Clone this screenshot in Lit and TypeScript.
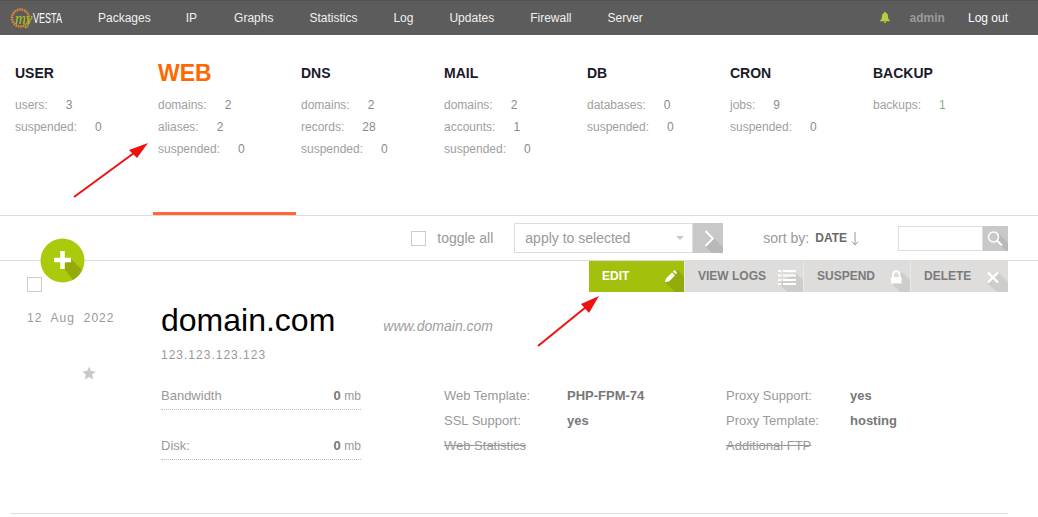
import { LitElement, html, css, svg } from "lit";
import { customElement } from "lit/decorators.js";

const NAV = ["Packages", "IP", "Graphs", "Statistics", "Log", "Updates", "Firewall", "Server"];
type Tab = { title: string; active?: boolean; rows: [string, string, boolean?][] };
const TABS: Tab[] = [
  { title: "USER", rows: [["users:", "3"], ["suspended:", "0"]] },
  { title: "WEB", active: true, rows: [["domains:", "2"], ["aliases:", "2"], ["suspended:", "0"]] },
  { title: "DNS", rows: [["domains:", "2"], ["records:", "28"], ["suspended:", "0"]] },
  { title: "MAIL", rows: [["domains:", "2"], ["accounts:", "1"], ["suspended:", "0"]] },
  { title: "DB", rows: [["databases:", "0"], ["suspended:", "0"]] },
  { title: "CRON", rows: [["jobs:", "9"], ["suspended:", "0"]] },
  { title: "BACKUP", rows: [["backups:", "1", true]] },
];

const shadow = (d: string, fill = "#cdcdcb") => svg`<path d=${d} fill=${fill}/>`;

@customElement("app-root")
export class AppRoot extends LitElement {
  static styles = css`
    :host { display: block; position: relative; width: 1038px; height: 517px; overflow: hidden; background: #fff;
      font-family: "Liberation Sans", Arial, sans-serif; color: #999; }
    .top { display: flex; align-items: center; height: 35px; background: #5c5c5c; box-shadow: inset 0 1px 0 #525252; font-size: 12px; color: #fff; }
    .logo { display: block; margin-left: 10px; width: 78px; height: 35px; flex: none; }
    nav { display: flex; gap: 36px; margin-left: 10px; }
    nav span { color: #f0f0f0; }
    nav span:nth-child(1) { margin-right: -1px; }
    nav span:nth-child(2) { margin-right: 1px; }
    .right { margin-left: auto; display: flex; align-items: center; padding-right: 30px; }
    .bell { display: block; margin-right: 20px; }
    .admin { color: #9a9a9a; font-weight: bold; margin-right: 23px; }
    .tabs { display: flex; height: 180px; padding-left: 10px; border-bottom: 1px solid #ddd; box-sizing: content-box; }
    .tab { width: 143px; height: 180px; box-sizing: border-box; padding: 30px 0 0 5px; }
    .tab.active { border-bottom: 3px solid #ff6633; }
    .tab h3 { margin: 0 0 13px; height: 16px; line-height: 16px; font-size: 14px; font-weight: bold; color: #1a1a2a; }
    .tab.active h3 { color: #ff6701; font-size: 23px; }
    .stat { display: flex; gap: 18px; height: 22px; line-height: 22px; font-size: 12px; color: #a0a0a0; }
    .stat b { font-weight: normal; color: #8a8a8a; }
    .stat b.ok { color: #8aaa8a; }
    .toolbar { display: flex; align-items: center; height: 44px; border-bottom: 1px solid #ddd; padding-right: 30px; justify-content: flex-end; font-size: 14px; color: #999; }
    .check { display: block; width: 15px; height: 15px; box-sizing: border-box; border: 1px solid #ccc; background: #fff; flex: none; }
    .toggle { margin: 0 21px 0 11px; }
    .select { display: flex; align-items: center; justify-content: space-between; width: 179px; height: 30px; box-sizing: border-box; border: 1px solid #ddd; padding: 0 8px 0 10px; }
    .caret { width: 0; height: 0; border: 4px solid transparent; border-top-color: #c8c8c8; border-bottom: 0; }
    .go { display: block; flex: none; }
    .sort { margin: 0 0 0 40px; }
    .date { font-size: 12px; font-weight: bold; color: #6a6a6a; margin-left: 6px; }
    .down { display: block; flex: none; margin: 0 39px 0 4px; }
    .search { width: 85px; height: 25px; box-sizing: border-box; border: 1px solid #ddd; flex: none; }
    .plus { position: absolute; left: 40px; top: 238px; width: 45px; height: 45px; display: block; }
    .row { display: grid; grid-template-columns: 151px 1fr; height: 252px; border-bottom: 1px solid #ddd; margin: 0 30px 0 10px; }
    .left { padding: 16px 0 0 17px; }
    .when { margin-top: 19px; font-size: 12px; letter-spacing: 1px; word-spacing: 4.500px; line-height: 14px; color: #999; }
    .star { display: block; margin: 41px 0 0 55px; }
    .actions { display: flex; justify-content: flex-end; height: 31px; font-size: 12px; font-weight: bold; }
    .act { display: flex; align-items: center; justify-content: space-between; box-sizing: border-box; height: 31px; padding-left: 13px; background: #dedddb; color: #7b7b7b; border-left: 1px solid #e8e8e6; }
    .act span { padding-bottom: 2px; }
    .act.edit { background: #a3c00c; color: #fff; border-left: 0; padding-left: 13px; }
    .act svg { display: block; }
    .title { display: flex; align-items: baseline; margin-top: 10px; height: 36px; line-height: 36px; }
    .title h1 { margin: 0; font-size: 32px; font-weight: normal; color: #000; }
    .title i { margin-left: 48px; font-size: 14px; color: #a0a0a0; }
    .ip { margin-top: 10px; font-size: 12px; letter-spacing: 1px; line-height: 14px; color: #999; }
    .details { display: grid; grid-template-columns: 283px 282px 1fr; margin-top: 26px; font-size: 13px; }
    .meter { display: flex; justify-content: space-between; align-items: baseline; width: 200px; height: 21px; line-height: 15px; border-bottom: 1px dotted #bbb; margin-bottom: 28px; }
    .meter b { color: #777; }
    .meter em { font-style: normal; font-size: 12px; }
    .meter span { color: #999; }
    .pair { display: grid; height: 25px; line-height: 15px; color: #999; }
    .a { grid-template-columns: 123px 1fr; }
    .b { grid-template-columns: 124px 1fr; }
    .pair b { color: #777; }
    .pair s { text-decoration: line-through; }
    .overlay { position: absolute; left: 0; top: 0; pointer-events: none; }
  `;

  render() {
    return html`
      <div class="top">
        <svg class="logo" viewBox="0 0 78 35">
          <circle cx="10.500" cy="18" r="8.500" fill="none" stroke="#e8892a" stroke-width="2.500" stroke-dasharray="1.600 .8"/>
          <text x="5" y="24" font-family="Liberation Serif" font-style="italic" font-size="17" fill="#a5c81e" textLength="17.500" lengthAdjust="spacingAndGlyphs">my</text>
          <text x="23" y="23" font-family="Liberation Sans" font-size="14" fill="#fff" textLength="29" lengthAdjust="spacingAndGlyphs">VESTA</text>
        </svg>
        <nav>${NAV.map((n) => html`<span>${n}</span>`)}</nav>
        <div class="right">
          <svg class="bell" width="10" height="11" viewBox="0 0 10 11"><path d="M5 0c.6 0 1 .4 1 1 1.700.4 2 2 2 3.500 0 1.500.5 3 2 4v.7H0v-.7c1.500-1 2-2.500 2-4C2 3 2.300 1.400 4 1c0-.6.4-1 1-1zM3.800 9.700h2.400c0 .8-.5 1.300-1.200 1.300s-1.200-.5-1.200-1.300z" fill="#b5cf3c"/></svg>
          <span class="admin">admin</span>
          <span>Log out</span>
        </div>
      </div>
      <div class="tabs">
        ${TABS.map((t) => html`
          <div class="tab ${t.active ? "active" : ""}">
            <h3>${t.title}</h3>
            ${t.rows.map(([k, v, ok]) => html`<div class="stat"><span>${k}</span><b class=${ok ? "ok" : ""}>${v}</b></div>`)}
          </div>`)}
      </div>
      <div class="toolbar">
        <span class="check"></span>
        <span class="toggle">toggle all</span>
        <div class="select"><span>apply to selected</span><span class="caret"></span></div>
        <svg class="go" width="30" height="30" viewBox="0 0 30 30">
          <rect width="30" height="30" fill="#c8c8c8"/>
          <path d="M12 23 L21 15 L30 24 V30 H19z" fill="#b8b8b8"/>
          <path d="M12.500 8 L20 15.500 L12.500 23" fill="none" stroke="#fff" stroke-width="1.800"/>
        </svg>
        <span class="sort">sort by:</span>
        <span class="date">DATE</span>
        <svg class="down" width="8" height="15" viewBox="0 0 8 15"><path d="M4 1v13M.8 10.500 4 14l3.200-3.500" fill="none" stroke="#999" stroke-width="1"/></svg>
        <span class="search"></span>
        <svg class="go" width="25" height="25" viewBox="0 0 25 25">
          <rect width="25" height="25" fill="#c8c8c8"/>
          <path d="M14 16 L23 25 H25 V17 L16 8z" fill="#b8b8b8"/>
          <circle cx="10.500" cy="11" r="5" fill="none" stroke="#fff" stroke-width="1.500"/>
          <path d="M14.500 15 L19 19.500" stroke="#fff" stroke-width="2"/>
        </svg>
      </div>
      <svg class="plus" viewBox="0 0 45 45">
        <circle cx="22.500" cy="22.500" r="22" fill="#aacb0c"/>
        <path d="M22 28 L31 21 L42 32 A22 22 0 0 1 33 42z" fill="#96aa0c"/>
        <path d="M22.500 13v18M14 22h17" stroke="#fff" stroke-width="4.500"/>
      </svg>
      <div class="row">
        <div class="left">
          <span class="check"></span>
          <div class="when">12 Aug 2022</div>
          <svg class="star" width="14" height="14" viewBox="0 0 14 14"><path d="M7 .5l1.900 4.500 4.900.4-3.700 3.200 1.100 4.800L7 10.900 2.800 13.400l1.100-4.800L.2 5.400l4.900-.4z" fill="#c8c8c8"/></svg>
        </div>
        <div class="main">
          <div class="actions">
            <div class="act edit" style="width:95px"><span>EDIT</span>
              <svg width="34" height="31" viewBox="0 0 34 31">
                ${shadow("M15 21 L28 9 L34 16 V31 H25z", "#93aa0c")}
                <path d="M15 21 L16 17.500 L22 11.500 L25 14.500 L19 20.500z M23 10.500 L24.500 9 L27 11.500 L26 13.500z" fill="#fff"/>
              </svg>
            </div>
            <div class="act" style="width:119px"><span>VIEW LOGS</span>
              <svg width="28" height="31" viewBox="0 0 28 31">
                ${shadow("M3 22 L21 12 L28 19 V31 H12z")}
                <path d="M3 9h3.500v2H3zM8 9h13v2H8zM3 13.500h3.500v2H3zM8 13.500h13v2H8zM3 18h3.500v2H3zM8 18h13v2H8zM3 22h3.500v2H3zM8 22h13v2H8z" fill="#fff"/>
              </svg>
            </div>
            <div class="act" style="width:107px"><span>SUSPEND</span>
              <svg width="30" height="31" viewBox="0 0 30 31">
                ${shadow("M11 22 L22 11 L30 19 V31 H20z")}
                <path d="M11 16h10.500v6.500H11z" fill="#fff"/>
                <path d="M13 16v-2.500a3.200 3.200 0 0 1 6.500 0V16" fill="none" stroke="#fff" stroke-width="1.800"/>
              </svg>
            </div>
            <div class="act" style="width:98px"><span>DELETE</span>
              <svg width="30" height="31" viewBox="0 0 30 31">
                ${shadow("M9 22 L20 11 L30 21 V31 H19z")}
                <path d="M10 11.500 L20 21.500 M20 11.500 L10 21.500" stroke="#fff" stroke-width="2.200" fill="none"/>
              </svg>
            </div>
          </div>
          <div class="title"><h1>domain.com</h1><i>www.domain.com</i></div>
          <div class="ip">123.123.123.123</div>
          <div class="details">
            <div>
              <div class="meter"><span>Bandwidth</span><span><b>0</b> <em>mb</em></span></div>
              <div class="meter"><span>Disk:</span><span><b>0</b> <em>mb</em></span></div>
            </div>
            <div>
              <div class="pair a"><span>Web Template:</span><b>PHP-FPM-74</b></div>
              <div class="pair a"><span>SSL Support:</span><b>yes</b></div>
              <div class="pair a"><s>Web Statistics</s></div>
            </div>
            <div>
              <div class="pair b"><span>Proxy Support:</span><b>yes</b></div>
              <div class="pair b"><span>Proxy Template:</span><b>hosting</b></div>
              <div class="pair b"><s>Additional FTP</s></div>
            </div>
          </div>
        </div>
      </div>
      <svg class="overlay" width="1038" height="517" viewBox="0 0 1038 517">
        <path d="M74 197 L134 153" stroke="#f01010" stroke-width="2" fill="none"/>
        <path d="M148 143 L129 150 L137 158z" fill="#f01010"/>
        <path d="M538 346 L586 307" stroke="#f01010" stroke-width="2" fill="none"/>
        <path d="M599 296 L581 304 L589 313z" fill="#f01010"/>
      </svg>
    `;
  }
}
